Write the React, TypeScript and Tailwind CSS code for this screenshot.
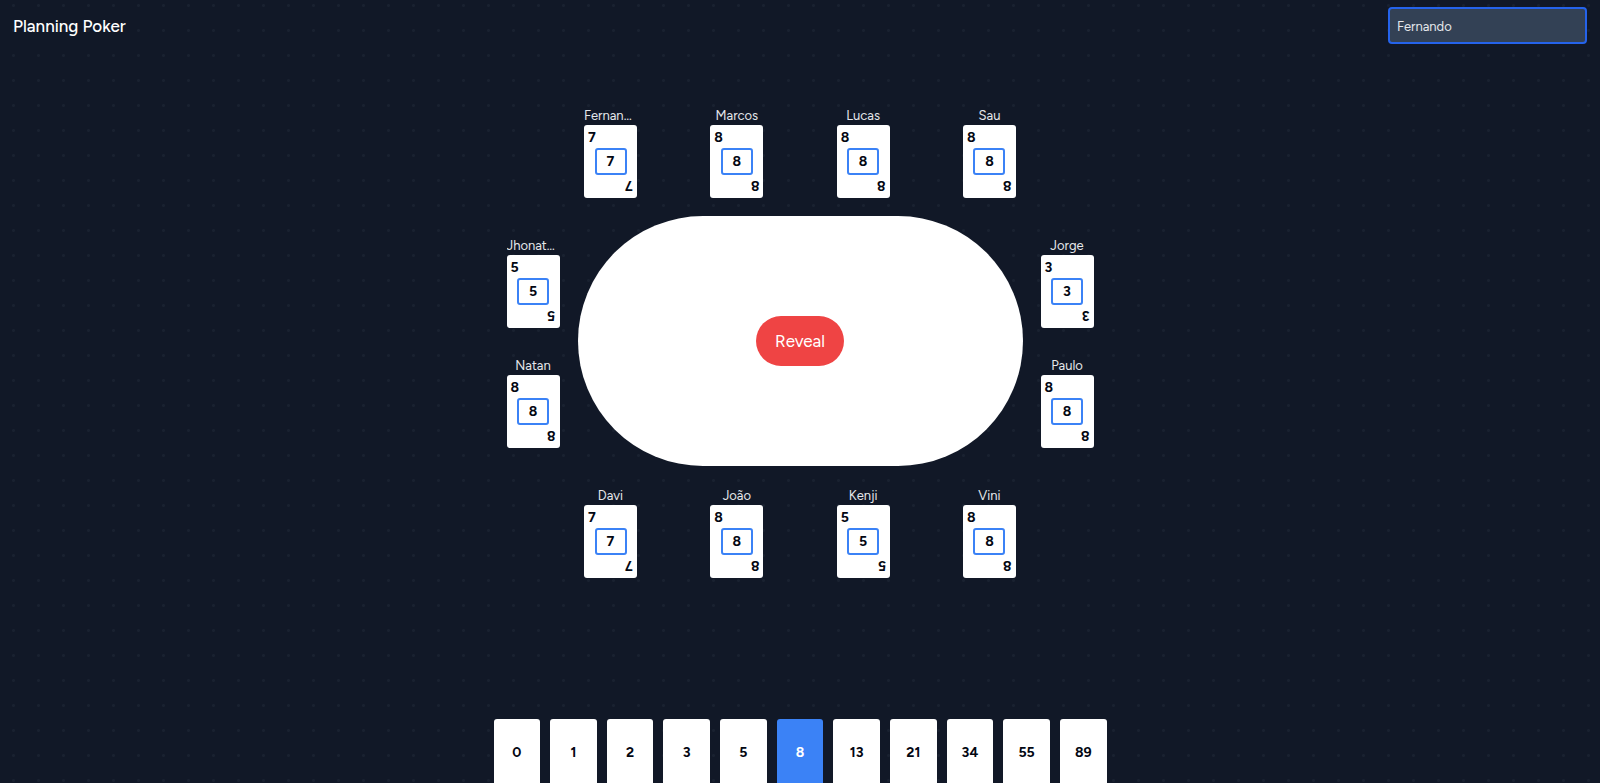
import { useState } from 'react';

type Player = { name: string; vote: number };

const top: Player[] = [
  { name: 'Fernando', vote: 7 },
  { name: 'Marcos', vote: 8 },
  { name: 'Lucas', vote: 8 },
  { name: 'Sau', vote: 8 },
];
const left: Player[] = [
  { name: 'Jhonatan', vote: 5 },
  { name: 'Natan', vote: 8 },
];
const right: Player[] = [
  { name: 'Jorge', vote: 3 },
  { name: 'Paulo', vote: 8 },
];
const bottom: Player[] = [
  { name: 'Davi', vote: 7 },
  { name: 'João', vote: 8 },
  { name: 'Kenji', vote: 5 },
  { name: 'Vini', vote: 8 },
];
const deck = [0, 1, 2, 3, 5, 8, 13, 21, 34, 55, 89];

function Seat({ name, vote }: Player) {
  return (
    <div className="w-[53px]">
      <p className="truncate pt-0.5 text-center text-[13px] leading-[19px] text-gray-200">{name}</p>
      <div className="flex h-[73px] flex-col justify-between rounded-[3px] bg-white px-1 py-[5px] text-sm leading-4 font-bold text-gray-950">
        <span className="self-start">{vote}</span>
        <span className="flex h-[27px] w-8 shrink-0 items-center justify-center self-center rounded-[3px] border-2 border-[#3b82f6] pt-px">
          {vote}
        </span>
        <span className="rotate-180 self-end">{vote}</span>
      </div>
    </div>
  );
}

export default function App() {
  const [name, setName] = useState('Fernando');
  const [picked, setPicked] = useState(8);

  return (
    <div className="flex min-h-screen flex-col bg-[#111827] bg-[radial-gradient(circle,#192130_1px,transparent_2px)] bg-[length:25px_25px] bg-[position:1px_-7px] font-[Figtree,Lato,sans-serif] text-white">
      <header className="flex items-center justify-between px-[13px] pt-[7px]">
        <h1 className="text-[17px] leading-6 font-medium">Planning Poker</h1>
        <input
          aria-label="Your name"
          value={name}
          onChange={(e) => setName(e.target.value)}
          className="h-[37px] w-[199px] rounded-sm border-2 border-[#2563eb] bg-[#334155] px-[7px] pt-px text-[13px] text-gray-200 outline-none"
        />
      </header>

      <main className="flex flex-col items-center gap-[18px] pt-[60px]">
        <section className="flex w-[432px] justify-between">
          {top.map((p) => (
            <Seat key={p.name} {...p} />
          ))}
        </section>
        <div className="flex items-center gap-[18px]">
          <section className="flex flex-col gap-[26px]">
            {left.map((p) => (
              <Seat key={p.name} {...p} />
            ))}
          </section>
          <div className="flex h-[250px] w-[445px] items-center justify-center rounded-full bg-white">
            <button type="button" className="h-[50px] rounded-full bg-[#ef4444] px-[19px] pt-px text-[17px]">
              Reveal
            </button>
          </div>
          <section className="flex flex-col gap-[26px]">
            {right.map((p) => (
              <Seat key={p.name} {...p} />
            ))}
          </section>
        </div>
        <section className="flex w-[432px] justify-between">
          {bottom.map((p) => (
            <Seat key={p.name} {...p} />
          ))}
        </section>
      </main>

      <footer className="mx-auto mt-auto flex w-[613px] gap-[10px]">
        {deck.map((n) => (
          <button
            key={n}
            type="button"
            aria-pressed={n === picked}
            onClick={() => setPicked(n)}
            className={
              n === picked
                ? 'h-16 flex-1 rounded-t-[3px] bg-[#3b82f6] pt-[3px] text-sm font-bold text-white'
                : 'h-16 flex-1 rounded-t-[3px] bg-white pt-[3px] text-sm font-bold text-gray-950'
            }
          >
            {n}
          </button>
        ))}
      </footer>
    </div>
  );
}
